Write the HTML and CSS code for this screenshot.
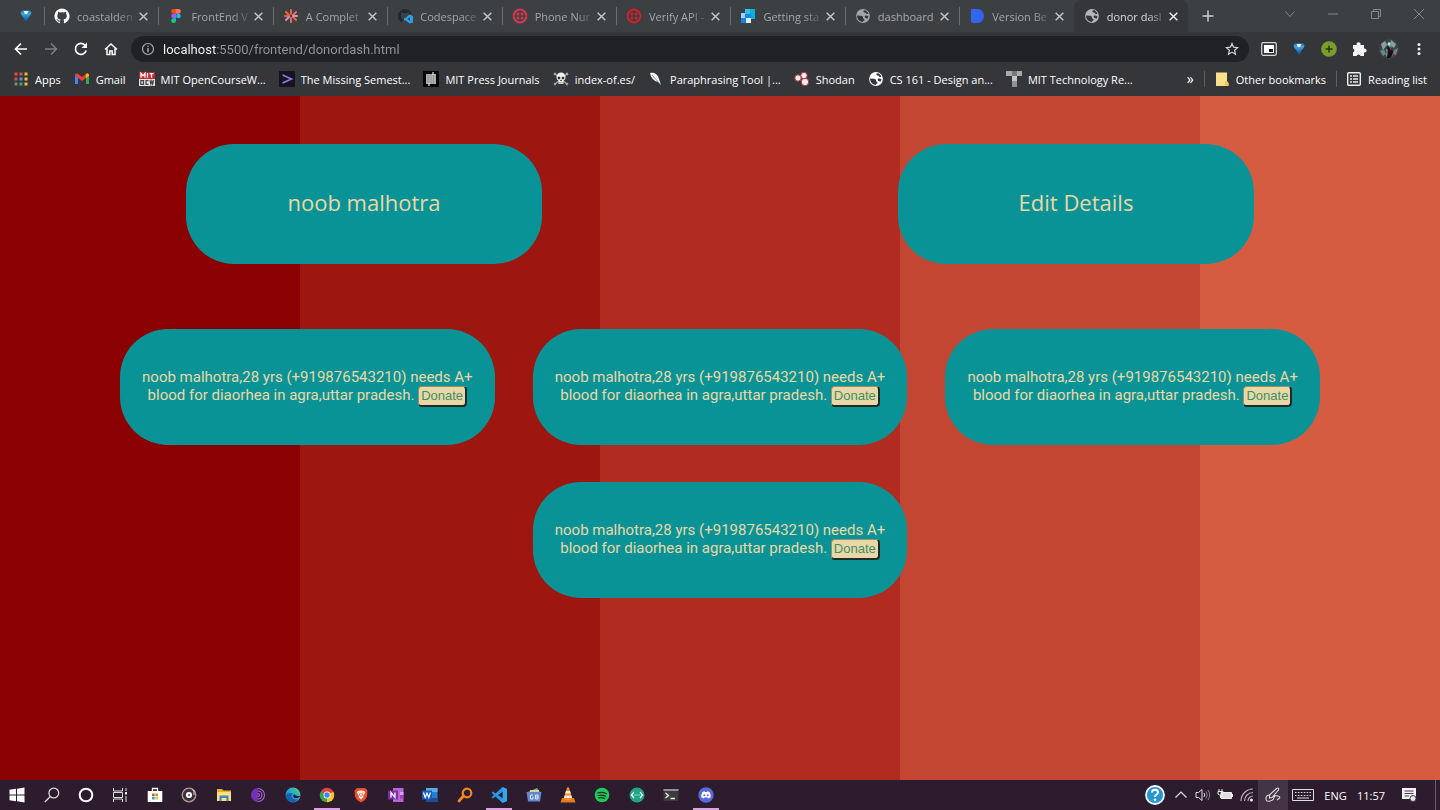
FILE: index.html
```html
<!DOCTYPE html>
<html lang="en">
<head>
<meta charset="utf-8">
<title>donor dashboard</title>
<link rel="stylesheet" href="styles.css">
</head>
<body>
<svg class="defs" aria-hidden="true">
  <defs>
    <linearGradient id="gem-fill" x1="0" y1="0" x2="0" y2="1"><stop offset="0" stop-color="#1b5f9f"/><stop offset=".3" stop-color="#4ba6de"/><stop offset=".6" stop-color="#1f7fc6"/><stop offset="1" stop-color="#0b3f7c"/></linearGradient>
    <linearGradient id="edge-fill" x1="0" y1="1" x2="1" y2="0"><stop offset="0" stop-color="#1263c2"/><stop offset=".5" stop-color="#20a5dc"/><stop offset="1" stop-color="#5fd667"/></linearGradient>
    <symbol id="close" viewBox="0 0 10 10"><path d="M1.500 1.500l7 7M8.500 1.500l-7 7" fill="none" stroke="currentColor" stroke-width="1.300"/></symbol>
    <symbol id="gem" viewBox="0 0 16 16"><path d="M2.500 4.500Q3 2 5 2h6q2 0 2.500 2.500-.5 2.500-3 5L8 14.500 5.500 9.500q-2.500-2.500-3-5z" fill="url(#gem-fill)"/><path d="M5.500 3h5L9 6H7z" fill="#e9f8ff"/></symbol>
    <symbol id="globe" viewBox="0 0 16 16"><circle cx="8" cy="8" r="6.900" fill="currentColor"/><path d="M8.500 2.500c-.5 1.500.5 2 1.500 2s.5 1.500 2 1.500h1.500l-1-2-2-1.700zM2 7.500l4 .2c1.500 0 2.200 1 2 2s1.500.800 1.500 2-1.500 1-1.800 2.300C4.500 13.600 2 11 2 7.500zM9.800 8c.8-1 2.500-.3 3.700.2l-.8 2.300c-1.700.3-3.400-1-2.900-2.500z" fill="#35363a"/></symbol>
    <symbol id="twilio" viewBox="0 0 16 16"><circle cx="8" cy="8" r="6.400" fill="none" stroke="currentColor" stroke-width="2"/><g fill="currentColor"><circle cx="5.900" cy="5.900" r="1.600"/><circle cx="10.100" cy="5.900" r="1.600"/><circle cx="5.900" cy="10.100" r="1.600"/><circle cx="10.100" cy="10.100" r="1.600"/></g></symbol>
  </defs>
</svg>

<header class="browser">
  <div class="tabstrip">
    <div class="pinned"><svg class="icon"><use href="#gem"/></svg></div>
    <div class="tabs" role="tablist">
      <div class="tab" role="tab"><svg class="icon" viewBox="0 0 16 16"><path fill="#fff" d="M8 .5a7.600 7.600 0 0 0-2.400 14.800c.4.1.5-.2.5-.4v-1.300c-2.100.5-2.600-1-2.600-1-.3-.9-.8-1.100-.8-1.100-.7-.5.1-.5.1-.5.800.1 1.200.8 1.200.8.700 1.200 1.800.9 2.200.7.1-.5.300-.9.500-1.100-1.700-.2-3.400-.8-3.400-3.700 0-.8.300-1.500.8-2-.1-.2-.4-1 .1-2 0 0 .6-.2 2 .8a7 7 0 0 1 3.700 0c1.400-1 2-.8 2-.8.5 1 .2 1.800.1 2 .5.500.8 1.200.8 2 0 2.900-1.700 3.500-3.400 3.700.3.200.5.700.5 1.400v2.100c0 .2.100.5.5.4A7.600 7.600 0 0 0 8 .5z"/></svg><span class="title">coastalden</span><button class="x" aria-label="Close"><svg><use href="#close"/></svg></button></div>
      <div class="tab" role="tab"><svg class="icon" viewBox="0 0 16 16"><path d="M8 1H5.500a2.300 2.300 0 0 0 0 4.700H8z" fill="#f24e1e"/><path d="M8 1h2.500a2.300 2.300 0 0 1 0 4.700H8z" fill="#ff7262"/><path d="M8 5.700H5.500a2.300 2.300 0 0 0 0 4.600H8z" fill="#a259ff"/><circle cx="10.500" cy="8" r="2.300" fill="#1abcfe"/><path d="M5.500 10.300H8v2.400a2.400 2.400 0 1 1-2.500-2.400z" fill="#0acf83"/></svg><span class="title">FrontEnd V</span><button class="x" aria-label="Close"><svg><use href="#close"/></svg></button></div>
      <div class="tab" role="tab"><svg class="icon" viewBox="0 0 16 16"><g stroke-width="2" stroke-linecap="round"><path d="M8 6V2M6 7L3 4M10 9l3 3M6 8H2" stroke="#f0643c"/><path d="M8 10v4M10 7l3-3" stroke="#ea6a6a"/><path d="M10 8h4M6 9l-3 3" stroke="#c497c8"/></g></svg><span class="title">A Complet</span><button class="x" aria-label="Close"><svg><use href="#close"/></svg></button></div>
      <div class="tab" role="tab"><svg class="icon" viewBox="0 0 16 16"><path d="M5 14.500A7 7 0 1 1 14.500 6l-2.500.5V4l-2 1H6L4 4v3c-.6 2 .5 4 2.500 4.500z" fill="#202830"/><path d="M12.500 6.500L16 8v6.500l-3.500 1L8 12l-1 .8v-3l1 .5zM13 9l-2.500 2 2.500 2z" fill="#2aa0e8" fill-rule="evenodd"/></svg><span class="title">Codespace</span><button class="x" aria-label="Close"><svg><use href="#close"/></svg></button></div>
      <div class="tab" role="tab"><svg class="icon rose"><use href="#twilio"/></svg><span class="title">Phone Nur</span><button class="x" aria-label="Close"><svg><use href="#close"/></svg></button></div>
      <div class="tab" role="tab"><svg class="icon red"><use href="#twilio"/></svg><span class="title">Verify API -</span><button class="x" aria-label="Close"><svg><use href="#close"/></svg></button></div>
      <div class="tab" role="tab"><svg class="icon" viewBox="0 0 16 16"><path d="M5 1h10v10H5z" fill="#00b2e3"/><path d="M1 5h10v10H1z" fill="#9dd6f5"/><path d="M5 5h6v6H5z" fill="#1a82e2"/><path d="M5 1h5v5H5z" fill="#29c4ee"/><path d="M1 10h5v5H1z" fill="#1a82e2"/><path d="M6 10h5v5H6z" fill="#d8effc"/></svg><span class="title">Getting sta</span><button class="x" aria-label="Close"><svg><use href="#close"/></svg></button></div>
      <div class="tab" role="tab"><svg class="icon"><use href="#globe"/></svg><span class="title whole">dashboard</span><button class="x" aria-label="Close"><svg><use href="#close"/></svg></button></div>
      <div class="tab" role="tab"><svg class="icon" viewBox="0 0 16 16"><path d="M2 1h6.500a6.500 7 0 0 1 0 14H4a2 2 0 0 1-2-2z" fill="#3366f0"/></svg><span class="title">Version Be</span><button class="x" aria-label="Close"><svg><use href="#close"/></svg></button></div>
      <div class="tab active" role="tab" aria-selected="true"><svg class="icon"><use href="#globe"/></svg><span class="title">donor dasl</span><button class="x" aria-label="Close"><svg><use href="#close"/></svg></button></div>
    </div>
    <button class="newtab" aria-label="New tab"><svg viewBox="0 0 12 12"><path d="M6 .5v11M.5 6h11" stroke="currentColor" stroke-width="1.500"/></svg></button>
    <div class="window-buttons">
      <button aria-label="Search tabs"><svg viewBox="0 0 12 12"><path d="M1.500 3.500L6 8.500l4.500-5" fill="none" stroke="currentColor"/></svg></button>
      <button aria-label="Minimize"><svg viewBox="0 0 12 12"><path d="M1 6h10" stroke="currentColor"/></svg></button>
      <button aria-label="Restore"><svg viewBox="0 0 12 12"><path d="M1.500 3.500h7v7h-7zM3.500 3.500v-2h7v7h-2" fill="none" stroke="currentColor"/></svg></button>
      <button aria-label="Close window"><svg viewBox="0 0 12 12"><path d="M1 1l10 10M11 1L1 11" stroke="currentColor"/></svg></button>
    </div>
  </div>

  <div class="toolbar">
    <div class="nav">
      <button aria-label="Back"><svg viewBox="0 0 16 16"><path d="M14 8H3M8 2.500L2.500 8 8 13.500" fill="none" stroke="currentColor" stroke-width="1.600"/></svg></button>
      <button aria-label="Forward" disabled><svg viewBox="0 0 16 16"><path d="M2 8h11M8 2.500L13.500 8 8 13.500" fill="none" stroke="currentColor" stroke-width="1.500"/></svg></button>
      <button aria-label="Reload"><svg viewBox="0 0 16 16"><path d="M13.200 9.500A5.500 5.500 0 1 1 12 4.200" fill="none" stroke="currentColor" stroke-width="1.700"/><path d="M14 1.500v5.500H8.500z" fill="currentColor"/></svg></button>
      <button aria-label="Home"><svg viewBox="0 0 16 16"><path d="M2 8.500L8 3l6 5.500M4 7.500v6h2.800V10h2.400v3.500H12v-6" fill="none" stroke="currentColor" stroke-width="1.500"/></svg></button>
    </div>
    <div class="omnibox">
      <svg class="info" viewBox="0 0 14 14"><circle cx="7" cy="7" r="5.500" fill="none" stroke="currentColor" stroke-width="1.200"/><path d="M7 6v4.200M7 3.700v1.400" stroke="currentColor" stroke-width="1.400"/></svg>
      <input class="url" type="text" aria-label="Address" value="localhost:5500/frontend/donordash.html">
      <button class="star" aria-label="Bookmark"><svg viewBox="0 0 14 14"><path d="M7 1.500l1.600 3.700 4 .4-3 2.600.9 4L7 10.100l-3.500 2.100.9-4-3-2.600 4-.4z" fill="none" stroke="currentColor" stroke-width="1.200"/></svg></button>
    </div>
    <div class="extensions">
      <button aria-label="Picture in picture"><svg viewBox="0 0 16 16"><rect x=".7" y="1.700" width="14.600" height="12.600" rx="1.500" fill="none" stroke="#d6d7d9" stroke-width="1.200"/><path d="M3 4h10v8H3z" fill="#fff"/><path d="M8 8h4v3H8z" fill="#17181a"/></svg></button>
      <button aria-label="Gem extension"><svg><use href="#gem"/></svg></button>
      <button aria-label="Add"><svg viewBox="0 0 16 16"><circle cx="8" cy="8" r="7.800" fill="#7c9d2c"/><path d="M8 4.500v7M4.500 8h7" stroke="#27340a" stroke-width="1.500"/></svg></button>
      <button aria-label="Extensions"><svg viewBox="0 0 16 16"><path d="M2 4h3.800a2 2 0 1 1 3.600 0H13v3.600a2 2 0 1 1 0 3.800V15H9.500a2 2 0 0 0-3.900 0H2v-3.700a2 2 0 0 0 0-3.800z" fill="#f4f4f5"/></svg></button>
      <button class="avatar" aria-label="Profile"><svg viewBox="0 0 20 20"><circle cx="10" cy="10" r="10" fill="#39454a"/><path d="M2 5l4-3 2 4-4 5zM12 1l5 4-2 4-4-3z" fill="#8b9fa0"/><path d="M1 12l4-2 2 5-3 2zM15 11l4-2-2 7-3-1z" fill="#708083"/><path d="M9 3h3l1 5-3 2zM7 10h3v5l-3 3z" fill="#35a69c"/><path d="M8 7l5 2 1 5-3 5H8l1-6z" fill="#171016"/><path d="M10 8h3l-1 4zM7 13l2-1v4zM13 14l2 3h-2z" fill="#a53241"/><circle cx="10" cy="5" r="1.500" fill="#d5dada"/></svg></button>
      <button class="menu" aria-label="Menu"><svg viewBox="0 0 4 16"><g fill="#f0f0f1"><circle cx="2" cy="3.500" r="1.500"/><circle cx="2" cy="8" r="1.500"/><circle cx="2" cy="12.500" r="1.500"/></g></svg></button>
    </div>
  </div>

  <nav class="bookmarks" aria-label="Bookmarks">
    <a href="#"><svg class="icon" viewBox="0 0 16 16"><path d="M1.500 1.500h3v3h-3zM1.500 6.500h3v3h-3z" fill="#dc5146"/><path d="M6.500 1.500h3v3h-3z" fill="#dc5146"/><path d="M11.500 1.500h3v3h-3zM11.500 6.500h3v3h-3zM11.500 11.500h3v3h-3z" fill="#eebc3d"/><path d="M6.500 6.500h3v3h-3z" fill="#5391ec"/><path d="M1.500 11.500h3v3h-3zM6.500 11.500h3v3h-3z" fill="#4ca463"/></svg><span>Apps</span></a>
    <a href="#"><svg class="icon" viewBox="0 0 16 16"><path d="M1 4v9h3V6.500z" fill="#4285f4"/><path d="M15 4v9h-3V6.500z" fill="#34a853"/><path d="M1 4.500V4c0-1.500 1.700-2 2.800-1.200L8 6l4.200-3.200C13.300 2 15 2.500 15 4v.5L8 10z" fill="#ea4335"/><path d="M12 3l.5-.4C14 2 15 3 15 4v.8l-3 2.400z" fill="#fbbc04"/></svg><span>Gmail</span></a>
    <a href="#"><svg class="icon" viewBox="0 0 16 16"><path d="M0 1h16v7H0z" fill="#bf2731"/><path d="M0 8h16v7H0z" fill="#e4e4e4"/><path d="M2 6.800V2.300l2 2.500 2-2.500v4.500M8.500 2v4.800M10.500 2.700h4M12.500 2.700v4.100" fill="none" stroke="#fff" stroke-width="1.300"/><path d="M1.800 9.700h2.700v3.600H1.800zM9.500 9.700H7v3.600h2.500M11 9.200l.9 4 .9-3 .9 3 .9-4" fill="none" stroke="#434347" stroke-width="1.200"/></svg><span>MIT OpenCourseW...</span></a>
    <a href="#"><svg class="icon" viewBox="0 0 16 16"><path d="M0 0h16v16H0z" fill="#14131f"/><path d="M3.500 4l9 4-9 4" fill="none" stroke="#8b7de0" stroke-width="1.600"/></svg><span>The Missing Semest...</span></a>
    <a href="#"><svg class="icon" viewBox="0 0 16 16"><path d="M0 0h16v16H0z" fill="#050505"/><path d="M3 3h10v10H3z" fill="#aaa"/><path d="M5.500 3v10M8 3v10M10.500 3v10" stroke="#999"/><path d="M10 1v3M6 12v3" stroke="#e8e8e8" stroke-width="1.200"/></svg><span>MIT Press Journals</span></a>
    <a href="#"><svg class="icon" viewBox="0 0 16 16"><path d="M1 2l14 12M15 2L1 14M1 4l2-2M15 4l-2-2M1 12l2 2M15 12l-2 2" stroke="#aaa" stroke-width="1.200"/><path d="M3.500 6a4.500 4.500 0 0 1 9 0c0 2-.5 3-2 3.500V13h-5V9.500C4 9 3.500 8 3.500 6z" fill="#eee"/><path d="M5 6h2v2H5zM9 6h2v2H9zM7.500 9h1v1h-1zM7 11v2M9 11v2" fill="#222" stroke="#444" stroke-width=".5"/></svg><span>index-of.es/</span></a>
    <a href="#"><svg class="icon" viewBox="0 0 16 16"><path d="M2 2c5-1 8 2 9 6l2 6-3-3C6 10 3 7 2 2z" fill="#f3f3f3"/><path d="M4 4l8 9" stroke="#77787c" stroke-width=".8"/></svg><span>Paraphrasing Tool |...</span></a>
    <a href="#"><svg class="icon" viewBox="0 0 16 16"><g fill="#f5e9e9" stroke="#a83743"><circle cx="10" cy="4.500" r="3.200"/><circle cx="4" cy="7" r="3.200"/><circle cx="11" cy="11" r="3.700"/></g></svg><span>Shodan</span></a>
    <a href="#"><svg class="icon"><use href="#globe"/></svg><span>CS 161 - Design an...</span></a>
    <a href="#"><svg class="icon" viewBox="0 0 16 16"><path d="M0 0h6v5H0zM10 0h6v5h-6z" fill="#a8a9ab"/><path d="M6 0h5v5H6z" fill="#77787a"/><path d="M6 5h5v5H6z" fill="#c5c5c6"/><path d="M6 10h5v6H6z" fill="#909193"/></svg><span>MIT Technology Re...</span></a>
    <div class="bookmarks-end">
      <button class="more" aria-label="More bookmarks">»</button>
      <a class="divided" href="#"><svg class="icon" viewBox="0 0 16 16"><path d="M2 1.500h11v9l1.500 1.500v3H2z" fill="#fbe08a"/><path d="M11 14.800V11l2-1 1.500 2v2.800z" fill="#f1c956"/></svg><span>Other bookmarks</span></a>
      <a class="divided" href="#"><svg class="icon" viewBox="0 0 16 16"><rect x="1.700" y="1.700" width="12.600" height="12.600" rx="1" fill="none" stroke="#eee" stroke-width="1.400"/><path d="M4 5h2M4 8h2M4 11h2M7 5h5M7 8h5M7 11h5" stroke="#eee" stroke-width="1.500"/></svg><span>Reading list</span></a>
    </div>
  </nav>
</header>

<main class="page">
  <section class="top-cards">
    <a class="card heading" href="#">noob malhotra</a>
    <a class="card heading" href="#">Edit Details</a>
  </section>
  <section class="requests">
    <article class="card request"><p>noob malhotra,28 yrs (+919876543210) needs A+ blood for diaorhea in agra,uttar pradesh. <button>Donate</button></p></article>
    <article class="card request"><p>noob malhotra,28 yrs (+919876543210) needs A+ blood for diaorhea in agra,uttar pradesh. <button>Donate</button></p></article>
    <article class="card request"><p>noob malhotra,28 yrs (+919876543210) needs A+ blood for diaorhea in agra,uttar pradesh. <button>Donate</button></p></article>
    <article class="card request"><p>noob malhotra,28 yrs (+919876543210) needs A+ blood for diaorhea in agra,uttar pradesh. <button>Donate</button></p></article>
  </section>
</main>

<footer class="taskbar">
  <div class="apps">
    <button aria-label="Start"><svg viewBox="0 0 16 16"><path d="M.5 2.800l6.500-1v5.700H.5zM8 1.700L15.500.5v7H8zM.5 8.500H7v5.700l-6.500-1zM8 8.500h7.500v7L8 14.300z" fill="#fff"/></svg></button>
    <button aria-label="Search"><svg viewBox="0 0 16 16"><circle cx="9.800" cy="6" r="4.900" fill="none" stroke="#ddd" stroke-width="1.200"/><path d="M6.300 9.500L.8 15" stroke="#ddd" stroke-width="1.200"/></svg></button>
    <button aria-label="Cortana"><svg viewBox="0 0 16 16"><circle cx="8" cy="8" r="6.300" fill="none" stroke="#fff" stroke-width="2"/></svg></button>
    <button aria-label="Task view"><svg viewBox="0 0 16 16"><path d="M1.500 1v3h9V1M1.500 15v-3h9v3M1.500 5.500h9v5h-9zM14 1v3M14 9v6" fill="none" stroke="#ddd"/><path d="M13 5h2v2.500h-2z" fill="#eee"/></svg></button>
    <button aria-label="Store"><svg viewBox="0 0 16 16"><path d="M5.500 4V1.500h5V4" fill="none" stroke="#fff" stroke-width="1.300"/><path d="M.7 4h14.600v11H.7z" fill="#fff"/><path d="M5 6.500h2.700v2.700H5z" fill="#e5543a"/><path d="M8.300 6.500H11v2.700H8.300z" fill="#7eb842"/><path d="M5 9.800h2.700v2.700H5z" fill="#36a0df"/><path d="M8.300 9.800H11v2.700H8.300z" fill="#f5bd35"/></svg></button>
    <button aria-label="Music"><svg viewBox="0 0 16 16"><circle cx="8" cy="8" r="6.800" fill="#39303a" stroke="#bd9590" stroke-width="1.300"/><circle cx="8" cy="8" r="3.100" fill="#fff"/><circle cx="8" cy="8" r="1" fill="#444"/><path d="M13 4v4M11 2.500l3 2" stroke="#e3c9b8"/></svg></button>
    <button aria-label="File Explorer"><svg viewBox="0 0 16 16"><path d="M1 2h5l1.500 1.500H15V14H1z" fill="#e6af30"/><path d="M1 5h14v9H1z" fill="#fce17e"/><path d="M3.500 8.500h9V14h-2v-3h-5v3h-2z" fill="#3f86c4"/></svg></button>
    <button aria-label="Tor"><svg viewBox="0 0 16 16"><path d="M8 1a7 7 0 0 0 0 14z" fill="#7630b5"/><path d="M8 1.500a6.500 6.500 0 0 1 0 13M8 4a4 4 0 0 1 0 8M8 6.500a1.500 1.500 0 0 1 0 3" fill="none" stroke="#a56ad9" stroke-width="1.100"/></svg></button>
    <button aria-label="Edge"><svg viewBox="0 0 16 16"><circle cx="8" cy="8" r="7.500" fill="url(#edge-fill)"/><path d="M.8 9C1.500 6 6 5 8 7c-1.500.5-2 2-1 3.800 1 1.800 4 2.200 6.500 1.200-3 5-12 4-12.700-3z" fill="#1560b0"/><path d="M8 9.200c.2-.9 1.200-1.200 1-2.500 1 2 3.500 2.800 6.500 2.300-2 3-7 2.500-7.500.2z" fill="#2c1b2b"/></svg></button>
    <button class="running" aria-label="Chrome"><svg viewBox="0 0 16 16"><path d="M8 8L1.700 4.400A7.300 7.300 0 0 1 14.300 4.400z" fill="#e44134"/><path d="M8 8h0l6.300-3.600A7.300 7.300 0 0 1 8 15.300z" fill="#f9c32c"/><path d="M8 8v7.300A7.300 7.300 0 0 1 1.700 4.400z" fill="#37a354"/><circle cx="8" cy="8" r="3.500" fill="#fff"/><circle cx="8" cy="8" r="2.700" fill="#4385ef"/></svg></button>
    <button aria-label="Brave"><svg viewBox="0 0 16 16"><path d="M4 1h8l2.500 2.500-.5 6-2 3.500-4 2.500L4 13 2 9.500l-.5-6z" fill="#ef4d27"/><path d="M4.500 4L8 3.500l3.500.5L12 6l-2 3 .5 1L8 12.500 5.500 10 6 9 4 6z" fill="#fff"/><path d="M6 5.500l1 1-.5 1.500L8 9.500 9.500 8 9 6.500l1-1" fill="none" stroke="#ef4d27"/></svg></button>
    <button aria-label="OneNote"><svg viewBox="0 0 16 16"><path d="M5 1h10.500v14H5z" fill="#b965d5"/><path d="M12 5h3.500v3H12z" fill="#d8a0e8"/><path d="M12 8h3.500v3.500H12z" fill="#9646b3"/><path d="M0 3.500h10v9H0z" fill="#7b2e9f"/><path d="M3 10.500v-5l4 5v-5" fill="none" stroke="#fff" stroke-width="1.300"/></svg></button>
    <button aria-label="Word"><svg viewBox="0 0 16 16"><path d="M4 1h11.500v14H4z" fill="#2b7cd3"/><path d="M4 1h11.500v4H4z" fill="#55acef"/><path d="M4 11h11.500v4H4z" fill="#184f98"/><path d="M0 3.500h10v9H0z" fill="#195bb8"/><path d="M1.500 5.500l1.700 5L5 6l1.800 4.500 1.700-5" fill="none" stroke="#fff" stroke-width="1.200"/></svg></button>
    <button aria-label="Everything"><svg viewBox="0 0 16 16"><circle cx="10" cy="6" r="4.300" fill="none" stroke="#f18a1c" stroke-width="2.200"/><path d="M6.500 9L2 14" stroke="#f18a1c" stroke-width="2.800" stroke-linecap="round"/></svg></button>
    <button class="running" aria-label="Visual Studio Code"><svg viewBox="0 0 16 16"><path d="M11.500 0L16 2v12l-4.500 2-7-6.500L2 11.500.5 10.500 3 8 .5 5.500 2 4.500l2.500 2zM12 4.500L7 8l5 3.500z" fill="#2998e6" fill-rule="evenodd"/><path d="M11.500 0L16 2v12l-4.500 2z" fill="#41adf4" opacity=".6"/></svg></button>
    <button aria-label="Google Books"><svg viewBox="0 0 16 16"><path d="M2 5l9-4 3 4z" fill="#66b98a"/><path d="M4 3h9v5H4z" fill="#d6d2a0"/><path d="M.5 5h15L14 14.500H2z" fill="#6189cb"/><path d="M7 8H4.500v4H7v-2M9.500 8H12v4H9.500zM9.500 10H12" fill="none" stroke="#dbe6fa"/></svg></button>
    <button aria-label="VLC"><svg viewBox="0 0 16 16"><path d="M2 11h12l1.500 4.500H.5z" fill="#e27b1b"/><path d="M7 .5h2L12.500 12Q8 14.500 3.500 12z" fill="#f58b20"/><path d="M6 4h4l.8 2.500H5.200zM4.700 8.500h6.600l.7 2.500H4z" fill="#f0ece9"/></svg></button>
    <button aria-label="Spotify"><svg viewBox="0 0 16 16"><circle cx="8" cy="8" r="7.300" fill="#25c65c"/><path d="M3.700 6q4.700-1.500 8.800.8M4.200 8.500q4-1 7.300.8M4.700 10.800q3.400-.8 5.800.8" fill="none" stroke="#14351f" stroke-width="1.200" stroke-linecap="round"/></svg></button>
    <button aria-label="Dev tool"><svg viewBox="0 0 16 16"><circle cx="8" cy="8" r="7.500" fill="#20a486"/><path d="M5 5L2.500 8 5 11M11 5l2.500 3-2.500 3" fill="none" stroke="#fff" stroke-width="1.200"/><path d="M5.500 8h1M7.500 8h1M9.500 8h1" stroke="#fff" stroke-width="1.200"/></svg></button>
    <button aria-label="Terminal"><svg viewBox="0 0 16 16"><path d="M.5 2h15v12H.5z" fill="#3b3b3c"/><path d="M.5 2h15v2H.5z" fill="#909090"/><path d="M2.500 6l3 2.500-3 2.500M7.500 11.500H12" fill="none" stroke="#eee" stroke-width="1.300"/></svg></button>
    <button class="running" aria-label="Discord"><svg viewBox="0 0 16 16"><circle cx="8" cy="8" r="7.700" fill="#5968dc"/><path d="M4.500 5l2-.7.500.7h2l.5-.7 2 .7q1.500 2.500 1.200 5.200L10.500 11.500l-.7-1H6.200l-.7 1L3.300 10.200Q3 7.500 4.500 5z" fill="#fff"/><circle cx="6.300" cy="8.300" r="1" fill="#5968dc"/><circle cx="9.700" cy="8.300" r="1" fill="#5968dc"/></svg></button>
  </div>
  <div class="tray">
    <button class="help" aria-label="Help"><svg viewBox="0 0 20 20"><circle cx="10" cy="10" r="9" fill="#2497d0" stroke="#f3f7fa" stroke-width="1.800"/><path d="M7 7.500Q7 4.800 10 4.800t3 2.500Q13 9 11.200 9.800 10 10.500 10 12" fill="none" stroke="#fff" stroke-width="2"/><circle cx="10" cy="14.700" r="1.300" fill="#fff"/></svg></button>
    <button aria-label="Hidden icons"><svg viewBox="0 0 16 16"><path d="M2.500 10.500L8 5l5.500 5.500" fill="none" stroke="#ddd" stroke-width="1.200"/></svg></button>
    <button aria-label="Volume"><svg viewBox="0 0 16 16"><path d="M1 5.500h2.500L7 2.500v11l-3.500-3H1z" fill="none" stroke="#ddd"/><path d="M9 6q1.500 2 0 4" fill="none" stroke="#ddd"/><path d="M11 4.500q2.500 3.500 0 7M13 3q3.500 5 0 10" fill="none" stroke="#8d838f"/></svg></button>
    <button aria-label="Battery"><svg viewBox="0 0 16 16"><path d="M4 5.500h10.500v6H4z" fill="#ddd" stroke="#eee"/><path d="M15.500 7v3M2 2v2M5 2v2M1 4.500h5V7L4.500 8h-2L1 7zM3.500 8v3" fill="none" stroke="#eee"/></svg></button>
    <button aria-label="Network"><svg viewBox="0 0 16 16"><path d="M2 14A12 12 0 0 1 14 2M5.500 14A8.500 8.500 0 0 1 14 5.500M9 14a5 5 0 0 1 5-5" fill="none" stroke="#b8afb9" stroke-width="1.200"/><circle cx="12.500" cy="13" r="1.500" fill="#eee"/></svg></button>
    <button class="pen" aria-label="Ink workspace"><svg viewBox="0 0 16 16"><path d="M4.500 8l7-6.500q1.500-1 2 0t-.5 2L7 10.500 4.500 11zM4.500 8Q1 8 1 11.500t4 2.500 4-3.500 4-1.500-1 4" fill="none" stroke="#ddd" stroke-width="1.100"/></svg></button>
    <button class="keyboard" aria-label="Touch keyboard"><svg viewBox="0 0 24 16"><path d="M1.500 2.500h21v11h-21z" fill="none" stroke="#ddd"/><path d="M4 5.500h16M4 8.500h16" stroke="#ddd" stroke-width="1.200" stroke-dasharray="1.500 1.400"/><path d="M6 11h12" stroke="#ddd"/></svg></button>
    <button class="lang">ENG</button>
    <button class="clock">11:57</button>
    <button class="notes" aria-label="Notifications"><svg viewBox="0 0 16 16"><path d="M1 1h14v11h-3v3l-3-3H1z" fill="#f4f4f4"/><path d="M3.500 4h9M3.500 6.500h9M3.500 9H8" stroke="#443946"/><circle cx="12" cy="11.500" r="3" fill="#e8e8e8" stroke="#443946"/></svg></button>
  </div>
</footer>
</body>
</html>
```
FILE: styles.css
```css
* { box-sizing: border-box; }

body {
  margin: 0;
  min-height: 100vh;
  display: flex;
  flex-direction: column;
  font-family: "Open Sans", "Noto Sans", sans-serif;
  font-size: 11px;
  color: #fff;
  background: #35363a;
}

button {
  margin: 0;
  padding: 0;
  border: 0;
  background: none;
  color: inherit;
  font: inherit;
}

a { color: inherit; text-decoration: none; }
svg { display: block; flex: none; }

.defs { position: absolute; width: 0; height: 0; }
.icon { width: 16px; height: 16px; }

/* tab strip */
.tabstrip { display: flex; height: 32px; background: #3c4043; color: #a4a7aa; }
.pinned { width: 44px; padding: 8px 10px 8px 18px; flex: none; }
.tabs { display: flex; flex: 0 1 1144px; min-width: 0; }
.tab {
  flex: 1;
  min-width: 0;
  display: flex;
  align-items: center;
  justify-content: space-between;
  padding: 0 9px 0 10px;
  background: linear-gradient(#696c70, #696c70) left center / 1px 18px no-repeat;
}
.tab .title {
  flex: 1;
  padding-left: 7px;
  white-space: nowrap;
  mask-image: linear-gradient(90deg, #000 70%, transparent 100%);
}
.tab .title.whole { mask-image: none; }
.tab .x svg { width: 11px; height: 11px; color: #c6c8ca; }
.tab.active { background: #35363a; border-radius: 7px 7px 0 0; color: #d8dadc; }
.tab.active .icon { color: #b3b5b7; }
.tab.active .x svg { color: #f1f1f1; }
.rose { color: #d8384e; }
.red { color: #c9202c; }
.newtab { width: 40px; color: #c9cbcd; }
.newtab svg { width: 12px; height: 12px; margin: 0 auto; }
.window-buttons { display: flex; margin-left: auto; color: #85888b; }
.window-buttons button { width: 43px; padding-bottom: 4px; }
.window-buttons svg { width: 12px; height: 12px; margin: 0 auto; }

/* toolbar */
.toolbar { display: flex; align-items: center; height: 34px; padding: 0 6px; }
.nav { display: flex; flex: none; }
.nav button { width: 30px; }
.nav svg { width: 16px; height: 16px; margin: 0 auto; }
.nav button:disabled { color: #7d7f82; }
.omnibox {
  flex: 1;
  display: flex;
  align-items: center;
  gap: 8px;
  height: 26px;
  margin-left: 5px;
  padding: 0 10px;
  border-radius: 13px;
  background: #202124;
}
.info { width: 14px; height: 14px; color: #aeb0b3; }
.url {
  flex: 1;
  min-width: 0;
  padding: 0;
  border: 0;
  outline: 0;
  font: 13px Roboto, "Noto Sans", sans-serif;
  color: transparent;
  background: linear-gradient(90deg, #fff 54px, #94979b 54px);
  background-clip: text;
}
.star svg { width: 14px; height: 14px; color: #d4d6d8; }
.extensions { display: flex; align-items: center; margin-left: 5px; }
.extensions button { width: 30px; }
.extensions svg { width: 16px; height: 16px; margin: 0 auto; }
.extensions .avatar svg { width: 20px; height: 20px; }

/* bookmarks */
.bookmarks { display: flex; align-items: center; gap: 13px; height: 30px; padding: 0 13px 4px; white-space: nowrap; }
.bookmarks a { display: flex; align-items: center; gap: 6px; }
.bookmarks-end { display: flex; align-items: center; gap: 10px; margin-left: auto; }
.more { font-size: 14px; line-height: 14px; }
.bookmarks .divided { padding-left: 9px; border-left: 1px solid #5c5e62; }

/* donor page */
.page {
  flex: 1;
  display: flex;
  flex-direction: column;
  gap: 65px;
  padding: 48px 120px;
  background: linear-gradient(90deg, #8b0000 300px, #9d1710 300px 600px, #b12c20 600px 900px, #c34632 900px 1200px, #d65c41 1200px);
}
.card { border-radius: 48px; background: #0a9396; color: #e9d8a6; text-align: center; }
.top-cards { display: flex; justify-content: space-between; padding: 0 66px; }
.heading {
  width: calc(100% / 3);
  padding: 42px 20px 46px;
  font: 22px/32px "Open Sans", "Noto Sans", sans-serif;
}
.requests { display: flex; flex-wrap: wrap; justify-content: center; gap: 37px 38px; }
.request {
  width: calc((100% - 76px) / 3);
  padding: 39px 19px 38px;
  font: 15px/18px Roboto, "DejaVu Sans Condensed", sans-serif;
}
.request p { margin: 0; }
.request button {
  padding: 1px 2px;
  border: solid;
  border-width: 1px 2px 2px 1px;
  border-color: #9c8f68 #1f2a28 #1f2a28 #9c8f68;
  border-radius: 4px;
  background: #e9d8a6;
  color: #3f8f68;
  font: 13px/16px "Liberation Sans", sans-serif;
}

/* taskbar */
.taskbar { display: flex; justify-content: space-between; height: 30px; background: #2d1c2d; }
.apps { display: flex; flex: 0 1 723px; }
.apps button { flex: 1; }
.apps svg { width: 16px; height: 16px; margin: 0 auto; }
.apps .running { background: linear-gradient(#d9a3e2, #d9a3e2) center bottom / 26px 2px no-repeat; }
.tray { display: flex; align-items: stretch; border-right: 1px solid #6b5d6c; margin-right: 4px; }
.tray button { width: 22px; }
.tray svg { width: 16px; height: 16px; margin: 0 auto; }
.tray .help { width: 30px; }
.tray .help svg { width: 20px; height: 20px; }
.tray .pen { width: 30px; background: #443446; }
.tray .keyboard { width: 30px; }
.tray .keyboard svg { width: 24px; }
.tray .lang { width: 35px; font-size: 11px; }
.tray .clock { width: 36px; font-size: 11px; }
.tray .notes { width: 46px; padding-right: 6px; }
```
